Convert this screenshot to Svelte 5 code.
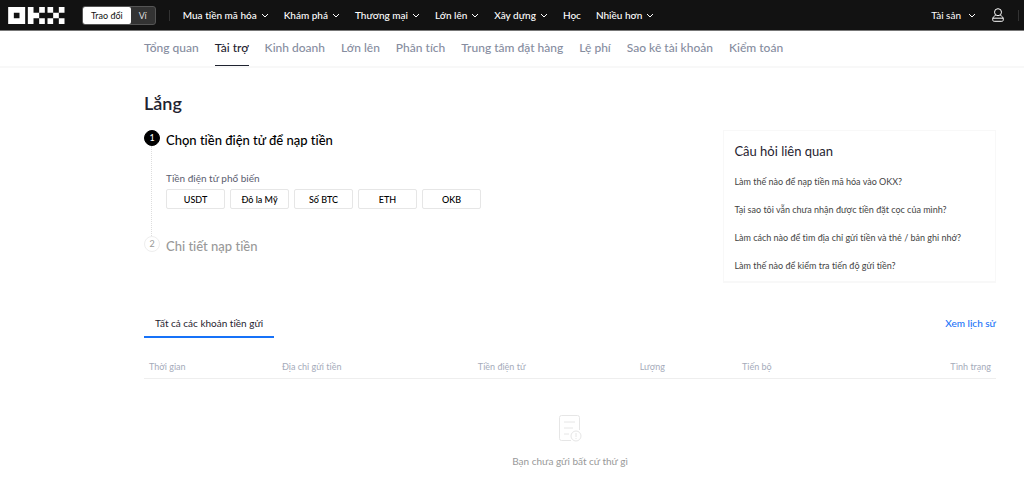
<script>
    const menu = [
        { label: "Mua tiền mã hóa", more: true },
        { label: "Khám phá", more: true },
        { label: "Thương mại", more: true },
        { label: "Lớn lên", more: true },
        { label: "Xây dựng", more: true },
        { label: "Học", more: false },
        { label: "Nhiều hơn", more: true },
    ];
    const tabs = [
        "Tổng quan",
        "Tài trợ",
        "Kinh doanh",
        "Lớn lên",
        "Phân tích",
        "Trung tâm đặt hàng",
        "Lệ phí",
        "Sao kê tài khoản",
        "Kiểm toán",
    ];
    const coins = ["USDT", "Đô la Mỹ", "Số BTC", "ETH", "OKB"];
    const questions = [
        "Làm thế nào để nạp tiền mã hóa vào OKX?",
        "Tại sao tôi vẫn chưa nhận được tiền đặt cọc của mình?",
        "Làm cách nào để tìm địa chỉ gửi tiền và thẻ / bản ghi nhớ?",
        "Làm thế nào để kiểm tra tiến độ gửi tiền?",
    ];
    const columns = ["Thời gian", "Địa chỉ gửi tiền", "Tiền điện tử", "Lượng", "Tiến bộ", "Tình trạng"];

    let mode = $state("trade");
    let activeTab = $state("Tài trợ");
</script>

{#snippet chevron()}
    <svg class="chevron" viewBox="0 0 8 5" width="8" height="5" aria-hidden="true">
        <path d="M1 1l3 3 3-3" fill="none" stroke="currentColor" />
    </svg>
{/snippet}

<header>
    <a class="logo" href="/" aria-label="OKX">
        <svg viewBox="0 0 170 51" width="57" height="17" fill="#fff">
            <path d="M0 0h51v51H0zM17 17v17h17V17z" fill-rule="evenodd" />
            <path d="M59 0h17v17h17v17H76v17H59zM93 0h17v17H93zM93 34h17v17H93z" />
            <path d="M118 0h17v17h-17zM152 0h17v17h-17zM135 17h17v17h-17zM118 34h17v17h-17zM152 34h17v17h-17z" />
        </svg>
    </a>
    <div class="switch">
        <button class:on={mode === "trade"} onclick={() => (mode = "trade")}>Trao đổi</button>
        <button class:on={mode === "wallet"} onclick={() => (mode = "wallet")}>Ví</button>
    </div>
    <span class="divider"></span>
    <nav class="menu">
        {#each menu as item}
            <a href="/">{item.label}{#if item.more}{@render chevron()}{/if}</a>
        {/each}
    </nav>
    <div class="account">
        <a href="/">Tài sản{@render chevron()}</a>
        <a class="user" href="/" aria-label="Tài khoản">
            <svg viewBox="0 0 12 14" width="12" height="14" fill="none" stroke="#fff">
                <circle cx="6" cy="4.2" r="3.5" />
                <path d="M3.6 7.4C1.8 8.2.7 9.4.7 11v.8c0 .9.6 1.5 1.5 1.5h7.6c.9 0 1.5-.6 1.5-1.5V11c0-1.6-1.1-2.8-2.9-3.6M1 10.2h10" />
            </svg>
        </a>
        <span class="divider"></span>
    </div>
</header>

<nav class="tabs">
    {#each tabs as tab}
        <a href="/" class:active={tab === activeTab}>{tab}</a>
    {/each}
</nav>

<main>
    <h1>Lắng</h1>
    <div class="deposit">
        <ol class="steps">
            <li class="current">
                <span class="number">1</span>
                <div class="body">
                    <h2>Chọn tiền điện tử để nạp tiền</h2>
                    <p>Tiền điện tử phổ biến</p>
                    <div class="coins">
                        {#each coins as coin}
                            <button>{coin}</button>
                        {/each}
                    </div>
                </div>
            </li>
            <li>
                <span class="number">2</span>
                <div class="body">
                    <h2>Chi tiết nạp tiền</h2>
                </div>
            </li>
        </ol>
        <aside>
            <h3>Câu hỏi liên quan</h3>
            {#each questions as question}
                <a href="/">{question}</a>
            {/each}
        </aside>
    </div>

    <div class="history">
        <button class="history-tab">Tất cả các khoản tiền gửi</button>
        <a href="/">Xem lịch sử</a>
    </div>
    <table>
        <thead>
            <tr>
                {#each columns as column}
                    <th>{column}</th>
                {/each}
            </tr>
        </thead>
        <tbody>
            <tr>
                <td colspan={columns.length}>
                    <svg viewBox="0 0 24 28" width="24" height="28" fill="none" stroke="#e6e6e6" aria-hidden="true">
                        <path d="M13 26.5H3.5a2 2 0 0 1-2-2v-21a2 2 0 0 1 2-2h16a2 2 0 0 1 2 2V16" />
                        <path d="M6 8h11M6 14h9M6 20h5" />
                        <circle cx="18" cy="22" r="5" />
                        <path d="M18 19v4M18 24v1" />
                    </svg>
                    <div>Bạn chưa gửi bất cứ thứ gì</div>
                </td>
            </tr>
        </tbody>
    </table>
</main>

<style>
    :global(body) {
        background: #fff;
        color: #1f2330;
        font-family: Lato, Roboto, "Noto Sans", sans-serif;
        font-size: 10px;
        font-variant-ligatures: none;
    }
    a {
        color: inherit;
        text-decoration: none;
    }
    button {
        font: inherit;
        font-variant-ligatures: none;
        cursor: pointer;
    }
    header {
        display: flex;
        align-items: center;
        height: 30px;
        padding-left: 8px;
        border-bottom: 1px solid #777;
        background: #121212;
        color: #fff;
    }
    .logo {
        display: flex;
    }
    .switch {
        display: flex;
        margin-left: 17px;
        border: 1px solid #555;
        border-radius: 3px;
        background: #333;
        font-size: 9px;
    }
    .switch button {
        height: 17px;
        padding: 0 8px;
        border: 0;
        border-radius: 2px;
        background: none;
        color: #ddd;
    }
    .switch .on {
        background: #fff;
        color: #121212;
    }
    .divider {
        width: 1px;
        height: 11px;
        background: #333;
    }
    .switch + .divider {
        margin: 0 13px;
    }
    .menu {
        display: flex;
        gap: 15px;
        font-weight: 500;
        white-space: nowrap;
    }
    .chevron {
        margin-left: 4px;
        vertical-align: 1px;
    }
    .account {
        display: flex;
        align-items: center;
        margin-left: auto;
        padding-right: 5px;
    }
    .account .chevron {
        margin-left: 7px;
    }
    .user {
        display: flex;
        margin: 0 14px 0 16px;
    }
    .tabs {
        display: flex;
        gap: 16px;
        padding: 0 28px 0 144px;
        border-bottom: 2px solid #f8f8f8;
        color: #868da0;
        font-size: 12px;
        font-weight: 500;
        line-height: 34px;
        white-space: nowrap;
    }
    .tabs a {
        border-bottom: 1px solid transparent;
    }
    .tabs .active {
        border-color: #1f2330;
        color: #1f2330;
    }
    main {
        padding: 23px 28px 16px 144px;
    }
    h1,
    h2,
    h3,
    p {
        margin: 0;
        font-weight: 500;
    }
    h1 {
        font-size: 18px;
        line-height: 24px;
        font-weight: 600;
    }
    .deposit {
        display: flex;
        justify-content: space-between;
        align-items: flex-start;
        margin-top: 15px;
    }
    .steps {
        margin: 0;
        padding: 0;
        list-style: none;
    }
    li {
        display: flex;
        gap: 6px;
        color: #999;
    }
    .number {
        box-sizing: border-box;
        width: 16px;
        height: 16px;
        border: 1px solid #eee;
        border-radius: 50%;
        font-size: 9px;
        line-height: 14px;
        text-align: center;
    }
    .current {
        position: relative;
        min-height: 106px;
        color: #000;
    }
    .current::before {
        content: "";
        position: absolute;
        top: 16px;
        bottom: 0;
        left: 7px;
        border-left: 1px dotted #ddd;
    }
    .current .number {
        border-color: #000;
        background: #000;
        color: #fff;
    }
    h2 {
        font-size: 13px;
        line-height: 20px;
    }
    p {
        margin-top: 20px;
        color: #5c6070;
        font-weight: 400;
        line-height: 16px;
    }
    .coins {
        display: flex;
        gap: 5px;
        margin-top: 3px;
    }
    .coins button {
        width: 59px;
        height: 20px;
        padding: 0;
        border: 1px solid #e6e6e6;
        border-radius: 2px;
        background: #fff;
        color: #000;
        font-size: 9px;
        font-weight: 500;
    }
    aside {
        box-sizing: border-box;
        width: 32%;
        padding: 10px 10px 1px;
        border: 1px solid #f8f8f8;
        border-bottom-width: 2px;
    }
    h3 {
        margin-bottom: 7px;
        font-size: 13px;
        line-height: 20px;
        font-weight: 400;
    }
    aside a {
        display: block;
        color: #444;
        font-size: 9px;
        line-height: 28px;
    }
    .history {
        display: flex;
        justify-content: space-between;
        margin-top: 27px;
        line-height: 26px;
    }
    .history-tab {
        padding: 0 11px;
        border: 0;
        border-bottom: 2px solid #1772f8;
        background: none;
        color: #1f2330;
        line-height: 26px;
    }
    .history a {
        color: #1772f8;
        font-weight: 500;
    }
    table {
        width: 100%;
        margin-top: 17px;
        border-collapse: collapse;
        table-layout: fixed;
        color: #a5abba;
        font-size: 9px;
    }
    th {
        box-sizing: border-box;
        padding: 0 5px;
        border-bottom: 1px solid #eee;
        font-weight: 400;
        line-height: 23px;
        text-align: left;
    }
    th:nth-child(1) {
        width: 15.6%;
    }
    th:nth-child(2) {
        width: 23%;
    }
    th:nth-child(3) {
        width: 19%;
    }
    th:nth-child(4) {
        width: 12%;
    }
    th:last-child {
        text-align: right;
    }
    td {
        padding: 35px 0 0;
        color: #999;
        font-size: 10px;
        line-height: 16px;
        text-align: center;
    }
    td svg {
        display: block;
        margin: 0 auto 11px;
    }
</style>
